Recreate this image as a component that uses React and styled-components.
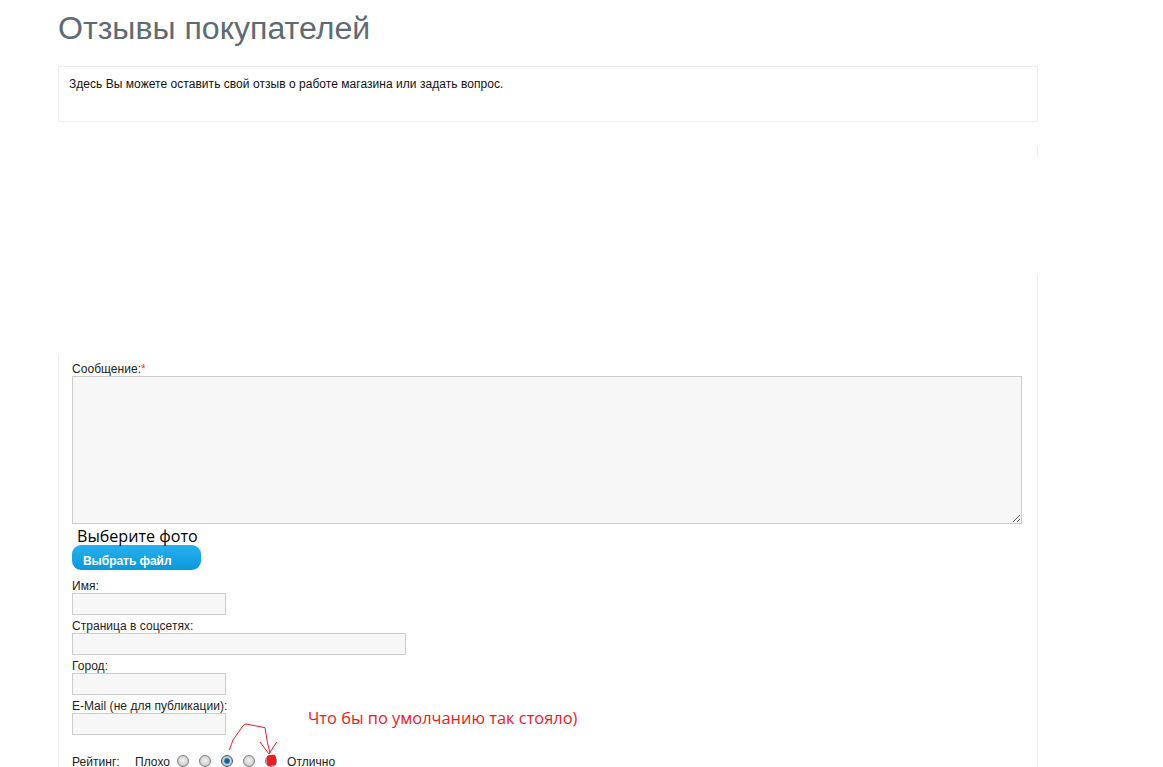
import React from 'react'
import styled, { createGlobalStyle } from 'styled-components'

const GlobalStyle = createGlobalStyle`
  html, body {
    margin: 0;
    height: 767px;
    overflow: hidden;
    background: #fff;
  }
  body {
    font-family: "Liberation Sans", Arial, sans-serif;
    font-size: 12px;
    letter-spacing: 0.04px;
    color: #222;
  }
`
const Page = styled.div`
  position: relative;
  width: 980px;
  margin-left: 58px;
`
const Title = styled.h1`
  margin: 0;
  height: 66px;
  padding-top: 10px;
  box-sizing: border-box;
  font-size: 32.1px;
  line-height: 36px;
  font-weight: 400;
  letter-spacing: 0;
  color: #5e6b74;
`
const Intro = styled.div`
  height: 56px;
  box-sizing: border-box;
  padding: 10px;
  border: 1px solid #eee;
  line-height: 14px;
  color: #111;
`
const Blank = styled.div`
  height: 153px;
  display: flex;
  flex-direction: column;
  align-items: flex-end;
`
const Tick = styled.div`
  margin-top: 24px;
  width: 1px;
  height: 10px;
  background: #eee;
`
const Panel = styled.div`
  border-right: 1px solid #eee;
  padding-top: 80px;
`
const Form = styled.form`
  border-left: 1px solid #eee;
  padding: 3px 15px 0 13px;
`
const Label = styled.label`
  display: block;
  height: 18px;
  line-height: 22px;
  color: #222;
`
const Star = styled.span`
  color: #f33;
`
const Message = styled.textarea`
  display: block;
  box-sizing: border-box;
  width: 950px;
  height: 148px;
  margin: 0;
  background: #f7f7f7;
  border: 1px solid #ccc;
  border-radius: 0;
  outline: none;
`
const PhotoTitle = styled.div`
  height: 21px;
  padding-left: 5px;
  font-family: "Open Sans", sans-serif;
  font-size: 16.1px;
  line-height: 24px;
  letter-spacing: 0;
  color: #000;
`
const FileButton = styled.button`
  display: block;
  box-sizing: border-box;
  width: 129px;
  height: 25px;
  margin: 0 0 5px;
  padding: 7px 0 0 11px;
  border: 0;
  border-radius: 9px;
  background: linear-gradient(#27b0ee, #0a98dc);
  color: #fff;
  font-family: "Liberation Sans", Arial, sans-serif;
  font-size: 12px;
  font-weight: 700;
  letter-spacing: -0.05px;
  text-align: left;
`
const TextInput = styled.input`
  display: block;
  box-sizing: border-box;
  width: ${({ $width }) => $width}px;
  height: 22px;
  margin: 0;
  background: #f7f7f7;
  border: 1px solid #ccc;
  border-radius: 0;
  outline: none;
`
const RatingRow = styled.div`
  display: flex;
  align-items: center;
  height: 14px;
  margin-top: 20px;
  color: #222;
`
const RatingName = styled.span`
  width: 63px;
`
const Radios = styled.div`
  display: flex;
  gap: 10px;
  margin: 0 10px 2px 7px;
`
const Radio = styled.input.attrs({ type: 'radio', name: 'rating' })`
  appearance: none;
  display: block;
  width: 12px;
  height: 12px;
  margin: 0;
  border-radius: 50%;
  border: 1px solid #7f7f7f;
  box-sizing: border-box;
  background: radial-gradient(circle at 50% 45%, #f2f2f2 0, #d4d4d4 60%, #aaa 100%);

  &:checked {
    border-color: #4b5f70;
    background: radial-gradient(circle, #0d5c90 0, #176a9f 32%, #c9d2d8 48%, #9fa8af 100%);
  }
`
const Note = styled.div`
  position: absolute;
  left: 250px;
  top: 707px;
  font-family: "Open Sans", sans-serif;
  font-size: 16.4px;
  line-height: 22px;
  letter-spacing: 0;
  color: #f01a1a;
  white-space: nowrap;
`
const Scribble = styled.svg`
  position: absolute;
  left: 160px;
  top: 715px;
`

export default function App() {
  return (
    <>
      <GlobalStyle />
      <Page>
        <Title>Отзывы покупателей</Title>
        <Intro>Здесь Вы можете оставить свой отзыв о работе магазина или задать вопрос.</Intro>
        <Blank>
          <Tick />
        </Blank>
        <Panel>
          <Form>
            <Label>
              Сообщение:<Star>*</Star>
            </Label>
            <Message />
            <PhotoTitle>Выберите фото</PhotoTitle>
            <FileButton type="button">Выбрать файл</FileButton>
            <Label>Имя:</Label>
            <TextInput $width={154} />
            <Label>Страница в соцсетях:</Label>
            <TextInput $width={334} />
            <Label>Город:</Label>
            <TextInput $width={154} />
            <Label>E-Mail (не для публикации):</Label>
            <TextInput $width={154} />
            <RatingRow>
              <RatingName>Рейтинг:</RatingName>
              <span>Плохо</span>
              <Radios>
                <Radio />
                <Radio />
                <Radio defaultChecked />
                <Radio />
                <Radio />
              </Radios>
              <span>Отлично</span>
            </RatingRow>
          </Form>
        </Panel>
        <Note>Что бы по умолчанию так стояло)</Note>
        <Scribble width="70" height="52" viewBox="0 0 70 52" fill="none">
          <path
            d="M11.300 35 L15 25 L25 10.700 L28 9 L47 12.700 L49.300 26.700 L52 38"
            stroke="#ee1c25"
            strokeWidth="1"
          />
          <path d="M42 27 L51 39 L58.700 27" stroke="#ee1c25" strokeWidth="1" />
          <path d="M49.500 41 L56.500 40 L57.500 42 L57.500 49.500 L50 50.500 L49 46 Z" fill="#ee1c25" stroke="#ee1c25" />
        </Scribble>
      </Page>
    </>
  )
}
